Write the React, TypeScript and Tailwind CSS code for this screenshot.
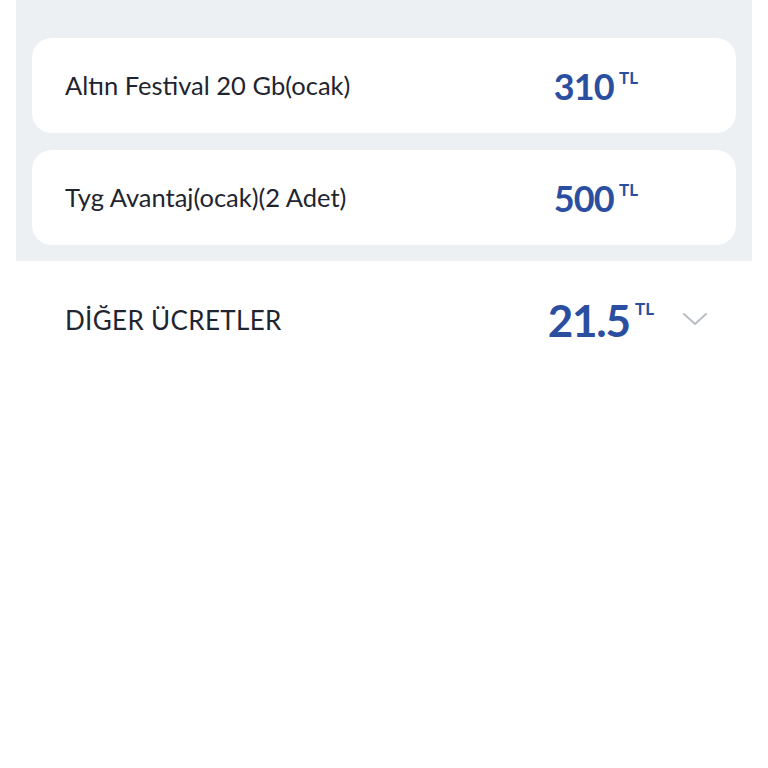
import React from 'react';

interface Package {
  name: string;
  price: string;
}

const packages: Package[] = [
  { name: 'Altın Festival 20 Gb(ocak)', price: '310' },
  { name: 'Tyg Avantaj(ocak)(2 Adet)', price: '500' },
];

export default function App() {
  return (
    <main className="min-h-screen w-[768px] bg-white" style={{ fontFamily: 'Lato, "Noto Sans", sans-serif' }}>
      {/* Paket listesi */}
      <div className="mx-4 bg-[#edf0f3] px-4 pt-[38px] pb-4 flex flex-col gap-[17px]">
        {packages.map((p) => (
          <div key={p.name} className="h-[95px] rounded-[20px] bg-white flex items-center pl-[33px] pr-[98px]">
            <span className="flex-1 text-[25.5px] text-[#1f2530]">{p.name}</span>
            <span className="flex items-start text-[#2b4fa0] font-bold">
              <span className="text-[36px] leading-none tracking-[-0.8px]">{p.price}</span>
              <span className="text-[17px] leading-none ml-[5px] mt-[1px]">TL</span>
            </span>
          </div>
        ))}
      </div>

      {/* Diğer ücretler */}
      <div className="flex items-center pl-[65px] pr-[60px] pt-[37px]">
        <span className="flex-1 text-[26px] text-[#1f2530] tracking-[0.35px]">DİĞER ÜCRETLER</span>
        <span className="flex items-start text-[#2b4fa0] font-bold">
          <span className="text-[44px] leading-none tracking-[-1.2px]">21.5</span>
          <span className="text-[17px] leading-none ml-[5px] mt-[2px]">TL</span>
        </span>
        <svg className="ml-[28px] -mt-[3px]" width="26" height="16" viewBox="0 0 26 16" fill="none">
          <path d="M2 3 L13 13 L24 3" stroke="#b9bdc4" strokeWidth="2" strokeLinecap="round" strokeLinejoin="round" />
        </svg>
      </div>
    </main>
  );
}
